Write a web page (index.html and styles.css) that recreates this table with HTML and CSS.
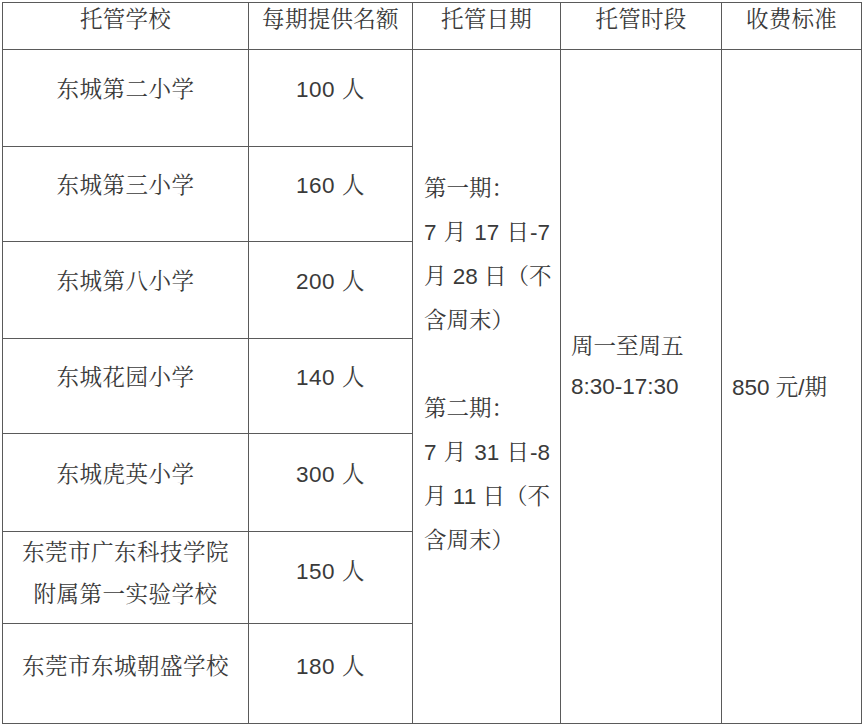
FILE: index.html
```html
<!DOCTYPE html>
<html lang="zh-CN">
<head>
<meta charset="utf-8">
<title>托管安排</title>
<link rel="stylesheet" href="styles.css">
</head>
<body>
<table class="sched">
  <colgroup>
    <col class="c-school">
    <col class="c-quota">
    <col class="c-date">
    <col class="c-time">
    <col class="c-fee">
  </colgroup>
  <thead>
    <tr class="r-head">
      <th>托管学校</th>
      <th>每期提供名额</th>
      <th>托管日期</th>
      <th>托管时段</th>
      <th>收费标准</th>
    </tr>
  </thead>
  <tbody>
    <tr class="r1">
      <td class="ctr">东城第二小学</td>
      <td class="ctr">100 人</td>
      <td class="date" rowspan="7">
        <div class="ln">第一期：</div>
        <div class="ln jl">7 月 17 日-7</div>
        <div class="ln jl">月 28 日（不</div>
        <div class="ln">含周末）</div>
        <div class="ln">&nbsp;</div>
        <div class="ln">第二期：</div>
        <div class="ln jl">7 月 31 日-8</div>
        <div class="ln jl">月 11 日（不</div>
        <div class="ln">含周末）</div>
      </td>
      <td class="time" rowspan="7">
        <div class="ln">周一至周五</div>
        <div class="ln">8:30-17:30</div>
      </td>
      <td class="fee" rowspan="7">
        <div class="ln">850 元/期</div>
      </td>
    </tr>
    <tr class="r2">
      <td class="ctr">东城第三小学</td>
      <td class="ctr">160 人</td>
    </tr>
    <tr class="r3">
      <td class="ctr">东城第八小学</td>
      <td class="ctr">200 人</td>
    </tr>
    <tr class="r4">
      <td class="ctr">东城花园小学</td>
      <td class="ctr">140 人</td>
    </tr>
    <tr class="r5">
      <td class="ctr">东城虎英小学</td>
      <td class="ctr">300 人</td>
    </tr>
    <tr class="r6">
      <td class="ctr two">东莞市广东科技学院<br>附属第一实验学校</td>
      <td class="ctr">150 人</td>
    </tr>
    <tr class="r7">
      <td class="ctr">东莞市东城朝盛学校</td>
      <td class="ctr">180 人</td>
    </tr>
  </tbody>
</table>
</body>
</html>
```

FILE: styles.css
```css
html, body {
  margin: 0;
  padding: 0;
  background: #ffffff;
}

body {
  font-family: "Liberation Sans", "Noto Serif CJK SC", "Noto Sans CJK SC", sans-serif;
  font-size: 22.5px;
  color: #3a3a3a;
}

.sched {
  margin: 2px 0 0 2px;
  border-collapse: collapse;
  table-layout: fixed;
  width: 859px;
}

.c-school { width: 246px; }
.c-quota { width: 164px; }
.c-date { width: 148px; }
.c-time { width: 161px; }
.c-fee { width: 140px; }

.sched th,
.sched td {
  border: 1px solid #5a5a5a;
  padding: 0;
  font-weight: 400;
}

.sched th {
  text-align: center;
  vertical-align: middle;
  padding-bottom: 13px;
  line-height: 30px;
  letter-spacing: 0.3px;
}

.r-head { height: 47px; }
.r1 { height: 97px; }
.r2 { height: 95px; }
.r3 { height: 97px; }
.r4 { height: 95px; }
.r5 { height: 98px; }
.r6 { height: 91px; }
.r7 { height: 100px; }

.ctr {
  text-align: center;
  vertical-align: middle;
  padding-bottom: 16px !important;
  line-height: 30px;
  letter-spacing: 0.5px;
}

.r6 .ctr { padding-bottom: 12px !important; }
.r7 .ctr { padding-bottom: 14px !important; }

.r6 .ctr.two {
  line-height: 42px;
  padding-bottom: 7px !important;
}

.date,
.time,
.fee {
  vertical-align: top;
  text-align: left;
}

.ln {
  line-height: 44px;
  white-space: nowrap;
}

.jl {
  text-align: justify;
  text-align-last: justify;
}

.date {
  padding: 117px 10px 0 11px !important;
}

.time {
  padding: 277px 8px 0 10px !important;
}

.time .ln {
  line-height: 40px;
}

.fee {
  padding: 316px 8px 0 10px !important;
}
```
